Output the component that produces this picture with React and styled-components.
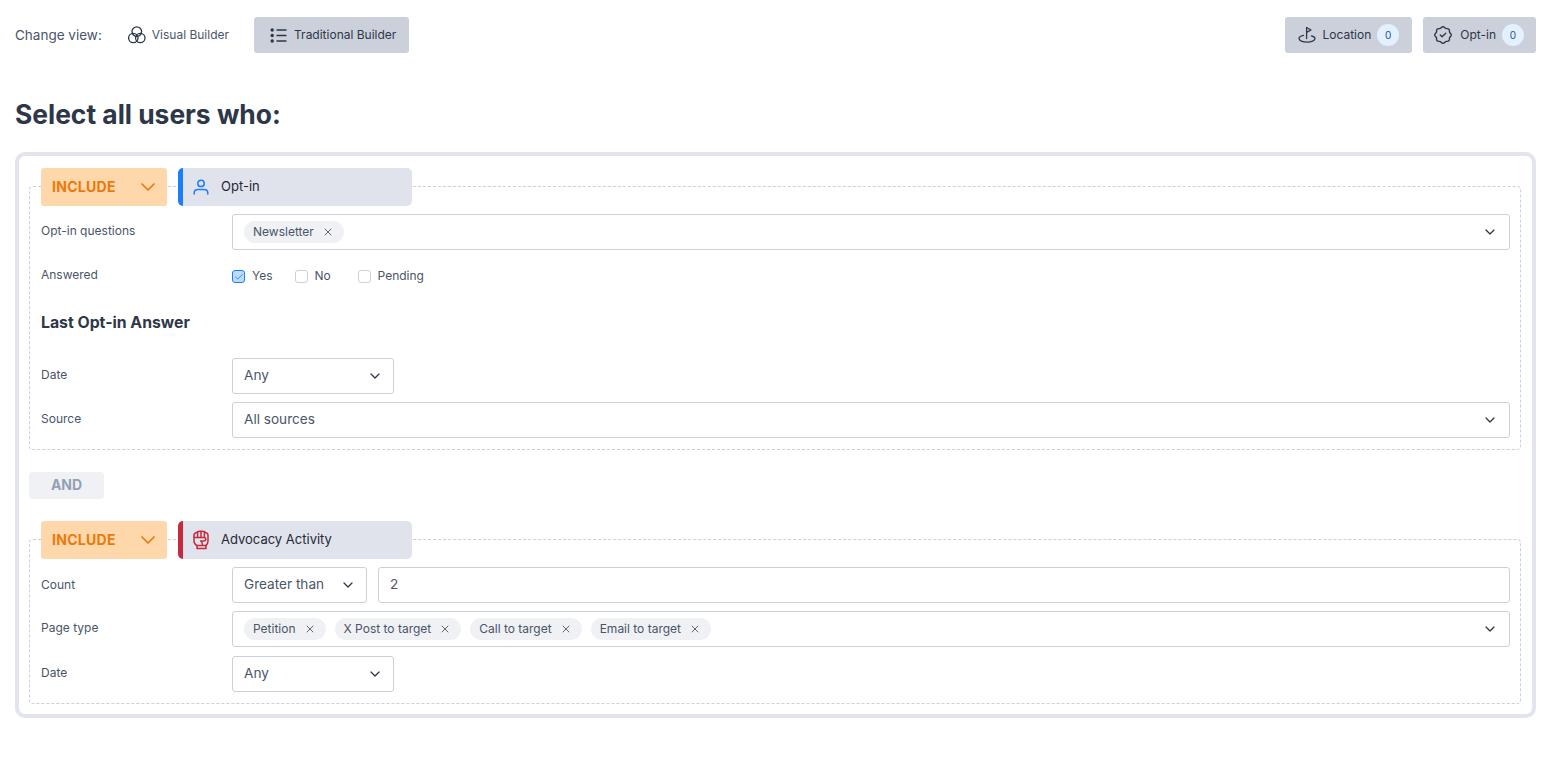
import React from 'react';
import styled, { createGlobalStyle } from 'styled-components';
import { ChevronDown, X, Check } from 'lucide-react';
import { TbRosetteDiscountCheck } from 'react-icons/tb';

const GlobalStyle = createGlobalStyle`
  body {
    margin: 0;
    background: #fff;
    font-family: Inter, "Liberation Sans", sans-serif;
    color: #2d3748;
  }
`;

const Page = styled.div`
  padding: 17px 19px 40px 15px;
`;

const Toolbar = styled.div`
  display: flex;
  justify-content: space-between;
  align-items: center;
`;

const ToolGroup = styled.div`
  display: flex;
  align-items: center;
  gap: ${(p) => p.$gap ?? 11}px;
`;

const ViewLabel = styled.span`
  font-size: 13.5px;
  color: #4a5568;
  margin-right: 14px;
`;

// the text sits a pixel above the middle of its control
const Lifted = styled.span`
  margin-bottom: 2px;
`;

const ToolButton = styled.div`
  display: flex;
  align-items: center;
  height: 36px;
  box-sizing: border-box;
  padding: ${(p) => p.$padding || '0 14px'};
  gap: ${(p) => p.$gap || 7}px;
  border-radius: 3px;
  font-size: 12px;
  color: ${(p) => (p.$active ? '#2d3748' : '#4a5568')};
  background: ${(p) => (p.$active ? '#cbd0da' : 'transparent')};
`;

const Count = styled.span`
  display: flex;
  align-items: center;
  justify-content: center;
  width: 22px;
  height: 22px;
  border-radius: 50%;
  background: #e3f0fd;
  color: #1f5597;
  font-size: 10px;
`;

const Title = styled.h1`
  margin: 45px 0 22px;
  font-size: 26.4px;
  line-height: 32px;
  font-weight: 700;
  color: #2d3748;
`;

const Panel = styled.div`
  border: 4px solid #e2e5ed;
  border-radius: 10px;
  padding: 12px 11px 10px 10px;
  height: 566px;
  box-sizing: border-box;
`;

const GroupHeader = styled.div`
  position: relative;
  z-index: 1;
  display: flex;
  gap: 11px;
  height: 38px;
  margin: 0 0 -20px 12px;
`;

const IncludeSelect = styled.div`
  display: flex;
  align-items: center;
  justify-content: space-between;
  width: 126px;
  box-sizing: border-box;
  padding: 0 7px 0 11px;
  border-radius: 3px;
  background: #fed7aa;
  color: #ea7a0c;
  font-size: 14px;
  letter-spacing: 0.3px;
  font-weight: 700;
`;

const Category = styled.div`
  display: flex;
  align-items: center;
  gap: 12px;
  width: 234px;
  box-sizing: border-box;
  padding-left: 10px;
  border-left: 5px solid ${(p) => p.$color};
  border-radius: 5px;
  background: #e0e3eb;
  font-size: 13px;
  color: #1f2937;
`;

const Box = styled.div`
  border: 1px dashed #cbd0da;
  border-radius: 4px;
  padding: 27px 10px 11px 11px;
  display: flex;
  flex-direction: column;
  gap: 8px;
`;

const Row = styled.div`
  display: grid;
  grid-template-columns: 191px 1fr;
  align-items: center;
  min-height: ${(p) => p.$height || 36}px;
  margin-top: ${(p) => p.$top || 0}px;
`;

const Label = styled.span`
  font-size: 12px;
  color: #4a5568;
  margin-top: ${(p) => p.$lift ?? -3}px;
`;

const Field = styled.div`
  display: flex;
  align-items: center;
  justify-content: space-between;
  flex: ${(p) => (p.$grow ? 1 : 'none')};
  width: ${(p) => (p.$width ? `${p.$width}px` : 'auto')};
  height: 36px;
  box-sizing: border-box;
  padding: 0 ${(p) => p.$right || 11}px 0 11px;
  border: 1px solid #cbd0da;
  border-radius: 3px;
  background: #fff;
  font-size: 13.6px;
  color: #4a5568;
`;

const Controls = styled.div`
  display: flex;
  gap: 11px;
`;

const Tags = styled.div`
  display: flex;
  gap: 9px;
`;

const Tag = styled.span`
  display: flex;
  align-items: center;
  gap: 8px;
  height: 22px;
  padding: 0 10px 0 9px;
  border-radius: 11px;
  background: #eff1f5;
  font-size: 12px;
  color: #4a5568;
`;

const Checks = styled.div`
  display: flex;
  gap: 22px;
`;

const CheckItem = styled.span`
  display: flex;
  align-items: center;
  gap: 7px;
  min-width: ${(p) => p.$width || 0}px;
  font-size: 12px;
  color: #4a5568;
  line-height: 15px;
`;

const CheckBox = styled.span`
  display: flex;
  align-items: center;
  justify-content: center;
  width: 11px;
  height: 11px;
  margin-top: 3px;
  border: 1px solid ${(p) => (p.$checked ? '#1a7fff' : '#cbd0da')};
  border-radius: 3px;
  background: ${(p) => (p.$checked ? '#bddbfd' : '#fff')};
  color: #1a7fff;
`;

const SubHeading = styled.h3`
  margin: 12px 0 16px;
  font-size: 15.8px;
  line-height: 22px;
  font-weight: 700;
  color: #2d3748;
`;

const AndButton = styled.div`
  display: flex;
  align-items: center;
  justify-content: center;
  width: 75px;
  height: 27px;
  margin: 22px 0;
  border-radius: 4px;
  background: #eff1f5;
  color: #95a0b3;
  font-size: 14px;
  font-weight: 700;
`;

const VisualIcon = () => (
  <svg width="18" height="18" viewBox="0 0 18 18" fill="none" stroke="#2d3748" strokeWidth="1.3">
    <circle cx="8.8" cy="5.6" r="4.8" />
    <circle cx="5.3" cy="12" r="4.7" />
    <circle cx="12.3" cy="12" r="4.7" />
  </svg>
);

const ListIcon = () => (
  <svg width="17" height="15" viewBox="0 0 17 15" fill="none" stroke="#2d3748" strokeWidth="1.3">
    <circle cx="2.2" cy="2" r="1.7" fill="#2d3748" stroke="none" />
    <circle cx="2.2" cy="7.5" r="1.7" fill="#2d3748" stroke="none" />
    <circle cx="2.2" cy="13" r="1.7" fill="#2d3748" stroke="none" />
    <path d="M6.5 2H16.5M6.5 7.5H16.5M6.5 13H16.5" />
  </svg>
);

const FlagIcon = () => (
  <svg width="18" height="18" viewBox="0 0 18 18" fill="none" stroke="#2d3748" strokeWidth="1.3" strokeLinecap="round" strokeLinejoin="round">
    <path d="M8.6 12.5V1.5L13 4L8.6 6.4" />
    <path d="M5.5 9.4C3 10 1 11 1 12.6C1 14.7 4.6 16.2 9 16.2C13.4 16.2 17 14.7 17 12.6C17 11.3 15.6 10.3 13.4 9.8" />
  </svg>
);

const UserIcon = () => (
  <svg width="16" height="16" viewBox="0 0 16 16" fill="none" stroke="#1a7fff" strokeWidth="1.5" strokeLinecap="round">
    <circle cx="8" cy="4.4" r="3.2" />
    <path d="M1.2 15V14C1.2 11.8 3 10.4 5 10.4H11C13 10.4 14.8 11.8 14.8 14V15" />
  </svg>
);

const FistIcon = () => (
  <svg width="16" height="20" viewBox="0 0 16 20" fill="none" stroke="#c52a3e" strokeWidth="1.5" strokeLinecap="round" strokeLinejoin="round">
    <path d="M1 5.5C1 3.8 2.2 2.6 3.6 2.4C4.8 1 11 1 12.4 2.4C14 2.6 15 3.8 15 5.5V11C15 13 14.2 14.4 13 15.4V18.6H4V15.6C2 14.6 1 13 1 11Z" />
    <path d="M4.6 2.4V7.4M8 1.6V7.4M11.4 2V7.4" />
    <path d="M1 7.6H11C12.4 7.6 13 8.6 12.8 9.6C12.6 10.6 11.6 11 10.6 11H7.6C8.8 11.8 9.6 13 9.4 14.6" />
    <path d="M4 15.6H13" />
  </svg>
);

const Chip = ({ children }) => (
  <Tag>
    <Lifted>{children}</Lifted>
    <X size={12} strokeWidth={1.5} color="#2d3748" />
  </Tag>
);

const Caret = () => <ChevronDown size={16} strokeWidth={1.9} color="#2d3748" />;

const Header = ({ color, icon, name }) => (
  <GroupHeader>
    <IncludeSelect>
      <Lifted>INCLUDE</Lifted>
      <ChevronDown size={24} strokeWidth={1.7} color="#ea7a0c" />
    </IncludeSelect>
    <Category $color={color}>
      {icon}
      <Lifted>{name}</Lifted>
    </Category>
  </GroupHeader>
);

const App = () => (
  <Page>
    <GlobalStyle />
    <Toolbar>
      <ToolGroup $gap={0}>
        <ViewLabel>Change view:</ViewLabel>
        <ToolButton $padding="0 25px 0 12px" $gap={6}>
          <VisualIcon />
          <Lifted>Visual Builder</Lifted>
        </ToolButton>
        <ToolButton $active $padding="0 13px 0 16px">
          <ListIcon />
          <Lifted>Traditional Builder</Lifted>
        </ToolButton>
      </ToolGroup>
      <ToolGroup>
        <ToolButton $active $padding="0 13px 0 13px" $gap={6}>
          <FlagIcon />
          <Lifted>Location</Lifted>
          <Count>0</Count>
        </ToolButton>
        <ToolButton $active $padding="0 12px 0 9px" $gap={6}>
          <TbRosetteDiscountCheck size={22} strokeWidth={1.5} />
          <Lifted>Opt-in</Lifted>
          <Count>0</Count>
        </ToolButton>
      </ToolGroup>
    </Toolbar>

    <Title>Select all users who:</Title>

    <Panel>
      <Header color="#1a7fff" icon={<UserIcon />} name="Opt-in" />
      <Box>
        <Row>
          <Label>Opt-in questions</Label>
          <Field>
            <Tags>
              <Chip>Newsletter</Chip>
            </Tags>
            <Caret />
          </Field>
        </Row>
        <Row $height={34}>
          <Label $lift={-1}>Answered</Label>
          <Checks>
            <CheckItem>
              <CheckBox $checked>
                <Check size={10} strokeWidth={2} />
              </CheckBox>
              Yes
            </CheckItem>
            <CheckItem $width={41}>
              <CheckBox />
              No
            </CheckItem>
            <CheckItem>
              <CheckBox />
              Pending
            </CheckItem>
          </Checks>
        </Row>
        <SubHeading>Last Opt-in Answer</SubHeading>
        <Row>
          <Label>Date</Label>
          <Field $width={162} $right={10}>
            <Lifted>Any</Lifted>
            <Caret />
          </Field>
        </Row>
        <Row>
          <Label>Source</Label>
          <Field>
            <Lifted>All sources</Lifted>
            <Caret />
          </Field>
        </Row>
      </Box>

      <AndButton>
        <Lifted>AND</Lifted>
      </AndButton>

      <Header color="#c52a3e" icon={<FistIcon />} name="Advocacy Activity" />
      <Box>
        <Row>
          <Label $lift={-1}>Count</Label>
          <Controls>
            <Field $width={135} $right={10}>
              <Lifted>Greater than</Lifted>
              <Caret />
            </Field>
            <Field $grow>
              <Lifted>2</Lifted>
            </Field>
          </Controls>
        </Row>
        <Row>
          <Label>Page type</Label>
          <Field>
            <Tags>
              <Chip>Petition</Chip>
              <Chip>X Post to target</Chip>
              <Chip>Call to target</Chip>
              <Chip>Email to target</Chip>
            </Tags>
            <Caret />
          </Field>
        </Row>
        <Row $top={1}>
          <Label>Date</Label>
          <Field $width={162} $right={10}>
            <Lifted>Any</Lifted>
            <Caret />
          </Field>
        </Row>
      </Box>
    </Panel>
  </Page>
);

export default App;
